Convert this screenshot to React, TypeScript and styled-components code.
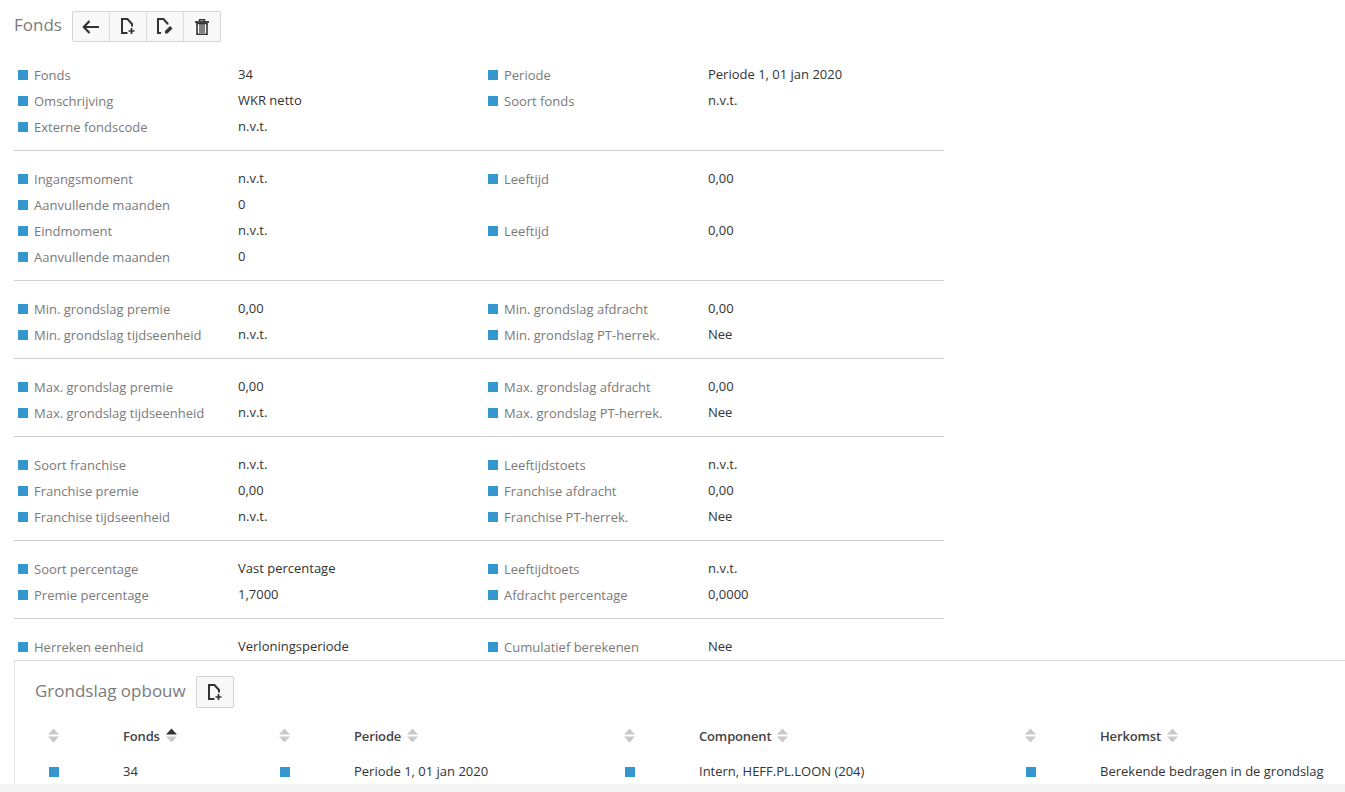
import { Fragment } from 'react';
import styled, { createGlobalStyle } from 'styled-components';

const GlobalStyle = createGlobalStyle`
	html, body {
		margin: 0;
		padding: 0;
		background: #fff;
		font-family: "Open Sans", "Liberation Sans", sans-serif;
	}
`;

const Page = styled.div`
	width: 1345px;
	height: 792px;
	display: flex;
	flex-direction: column;
	overflow: hidden;
	background: #fff;
`;

const Details = styled.div`
	height: 660px;
	flex: none;
	overflow: hidden;
	padding: 11px 0 0 14px;
	box-sizing: border-box;
`;

const Header = styled.div`
	display: flex;
	align-items: center;
	gap: 10px;
	height: 31px;
	margin-bottom: 20px;
`;

const Title = styled.h1`
	margin: 0 0 4px;
	font-size: 17px;
	font-weight: 400;
	color: #7b7b7b;
	line-height: 28px;
`;

const Toolbar = styled.div`
	display: flex;
	height: 31px;
	box-sizing: border-box;
	border: 1px solid #d5d5d5;
	border-radius: 2px;
	background: #f8f8f8;
`;

const ToolButton = styled.div`
	width: 37px;
	box-sizing: border-box;
	display: flex;
	align-items: center;
	justify-content: center;
	border-right: 1px solid #dcdcdc;

	&:last-child {
		width: 36px;
		border-right: none;
	}
`;

const Section = styled.div<{ $first?: boolean }>`
	width: 930px;
	padding: ${(p) => (p.$first ? '0' : '15px')} 0 10px;
	border-bottom: 1px solid #d0d0d0;

	&:last-child {
		border-bottom: none;
	}
`;

const Row = styled.div`
	display: grid;
	grid-template-columns: 470px 1fr;
	height: 26px;
`;

const Field = styled.div`
	display: grid;
	grid-template-columns: 220px 1fr;
	align-items: center;
	padding-left: 4px;
`;

const Label = styled.span`
	display: flex;
	align-items: center;
	gap: 6px;
	font-size: 13px;
	color: #7a7a7a;
	white-space: nowrap;
`;

const Bullet = styled.i`
	display: block;
	flex: none;
	width: 10px;
	height: 10px;
	background: #3498cf;
`;

const Value = styled.span`
	font-size: 13px;
	color: #333;
	white-space: nowrap;
	position: relative;
	top: -1px;
`;

const Panel = styled.div`
	flex: none;
	height: 124px;
	margin-left: 14px;
	box-sizing: border-box;
	border-top: 1px solid #d8d8d8;
	border-left: 1px solid #e2e2e2;
	overflow: hidden;
`;

const PanelHeader = styled.div`
	display: flex;
	align-items: center;
	gap: 10px;
	height: 32px;
	margin: 15px 0 0 20px;
`;

const PanelTitle = styled.h2`
	margin: 0 0 4px;
	font-size: 17px;
	font-weight: 400;
	color: #7b7b7b;
`;

const AddButton = styled.div`
	width: 38px;
	height: 32px;
	box-sizing: border-box;
	display: flex;
	align-items: center;
	justify-content: center;
	border: 1px solid #d5d5d5;
	border-radius: 2px;
	background: #f8f8f8;
`;

const Grid = styled.div`
	display: grid;
	grid-template-columns: 75px 156px 75px 270px 75px 326px 75px 1fr;
	padding-left: 33px;
	margin-top: 15px;
`;

const HeadCell = styled.div`
	height: 35px;
	box-sizing: border-box;
	padding-bottom: 10px;
	display: flex;
	align-items: center;
	gap: 6px;
	font-size: 13px;
	font-weight: 600;
	letter-spacing: -0.15px;
	color: #444;
	white-space: nowrap;
`;

const BodyCell = styled.div`
	height: 26px;
	display: flex;
	align-items: center;
	font-size: 13px;
	color: #333;
	white-space: nowrap;
`;

const BulletCell = styled(BodyCell)`
	padding: 2px 0 0 1px;
	box-sizing: border-box;
`;

const Footer = styled.div`
	flex: none;
	height: 8px;
	background: #f4f4f4;
`;

const ArrowIcon = () => (
	<svg width="17" height="14" viewBox="0 0 17 14">
		<path d="M7.5 1 L1.8 7 L7.5 13 M2.5 7 H17" fill="none" stroke="#333" strokeWidth="2.2" />
	</svg>
);

const NewDocIcon = () => (
	<svg width="14" height="17" viewBox="0 0 14 17">
		<path d="M6.5 15 H1 V1 H6.5 L11 6 V8.5" fill="none" stroke="#333" strokeWidth="2" />
		<path d="M10.5 10 V16 M7.5 13 H13.5" fill="none" stroke="#333" strokeWidth="1.7" />
	</svg>
);

const EditDocIcon = () => (
	<svg width="16" height="17" viewBox="0 0 16 17">
		<path d="M4 15 H1 V1 H6.5 L10.5 5.5 V6.5" fill="none" stroke="#333" strokeWidth="2" />
		<path d="M13 8 L15.5 10.5 L10.5 15.5 H8 V13 Z" fill="#333" />
	</svg>
);

const TrashIcon = () => (
	<svg width="14" height="16" viewBox="0 0 14 16">
		<path d="M0 3 H14" stroke="#333" strokeWidth="1.8" />
		<path d="M4.5 2.5 V0.8 H9.5 V2.5" fill="none" stroke="#333" strokeWidth="1.4" />
		<path d="M2 4.5 H12 V15.2 H2 Z" fill="none" stroke="#333" strokeWidth="1.6" />
		<path d="M5 5 V14 M7 5 V14 M9 5 V14" stroke="#333" strokeWidth="1.2" />
	</svg>
);

const SortIcon = ({ active }: { active?: boolean }) => (
	<svg width="11" height="15" viewBox="0 0 11 15">
		<path d="M5.5 0.5 L11 6.5 H0 Z" fill={active ? '#333' : '#c9c9c9'} />
		<path d="M0 8.5 H11 L5.5 14.5 Z" fill="#c9c9c9" />
	</svg>
);

type FieldData = [string, string];
type RowData = [FieldData, FieldData?];

const sections: RowData[][] = [
	[
		[['Fonds', '34'], ['Periode', 'Periode 1, 01 jan 2020']],
		[['Omschrijving', 'WKR netto'], ['Soort fonds', 'n.v.t.']],
		[['Externe fondscode', 'n.v.t.']],
	],
	[
		[['Ingangsmoment', 'n.v.t.'], ['Leeftijd', '0,00']],
		[['Aanvullende maanden', '0']],
		[['Eindmoment', 'n.v.t.'], ['Leeftijd', '0,00']],
		[['Aanvullende maanden', '0']],
	],
	[
		[['Min. grondslag premie', '0,00'], ['Min. grondslag afdracht', '0,00']],
		[['Min. grondslag tijdseenheid', 'n.v.t.'], ['Min. grondslag PT-herrek.', 'Nee']],
	],
	[
		[['Max. grondslag premie', '0,00'], ['Max. grondslag afdracht', '0,00']],
		[['Max. grondslag tijdseenheid', 'n.v.t.'], ['Max. grondslag PT-herrek.', 'Nee']],
	],
	[
		[['Soort franchise', 'n.v.t.'], ['Leeftijdstoets', 'n.v.t.']],
		[['Franchise premie', '0,00'], ['Franchise afdracht', '0,00']],
		[['Franchise tijdseenheid', 'n.v.t.'], ['Franchise PT-herrek.', 'Nee']],
	],
	[
		[['Soort percentage', 'Vast percentage'], ['Leeftijdtoets', 'n.v.t.']],
		[['Premie percentage', '1,7000'], ['Afdracht percentage', '0,0000']],
	],
	[[['Herreken eenheid', 'Verloningsperiode'], ['Cumulatief berekenen', 'Nee']]],
];

const columns = [
	{ title: 'Fonds', value: '34', active: true },
	{ title: 'Periode', value: 'Periode 1, 01 jan 2020' },
	{ title: 'Component', value: 'Intern, HEFF.PL.LOON (204)' },
	{ title: 'Herkomst', value: 'Berekende bedragen in de grondslag' },
];

const renderField = (field?: FieldData) =>
	field ? (
		<Field>
			<Label>
				<Bullet />
				{field[0]}
			</Label>
			<Value>{field[1]}</Value>
		</Field>
	) : (
		<div />
	);

function App() {
	return (
		<>
			<GlobalStyle />
			<Page>
				<Details>
					<Header>
						<Title>Fonds</Title>
						<Toolbar>
							<ToolButton>
								<ArrowIcon />
							</ToolButton>
							<ToolButton>
								<NewDocIcon />
							</ToolButton>
							<ToolButton>
								<EditDocIcon />
							</ToolButton>
							<ToolButton>
								<TrashIcon />
							</ToolButton>
						</Toolbar>
					</Header>
					{sections.map((rows, i) => (
						<Section key={i} $first={i === 0}>
							{rows.map((row, j) => (
								<Row key={j}>
									{renderField(row[0])}
									{renderField(row[1])}
								</Row>
							))}
						</Section>
					))}
				</Details>
				<Panel>
					<PanelHeader>
						<PanelTitle>Grondslag opbouw</PanelTitle>
						<AddButton>
							<NewDocIcon />
						</AddButton>
					</PanelHeader>
					<Grid>
						{columns.map((c) => (
							<Fragment key={c.title}>
								<HeadCell>
									<SortIcon />
								</HeadCell>
								<HeadCell>
									{c.title}
									<SortIcon active={c.active} />
								</HeadCell>
							</Fragment>
						))}
						{columns.map((c) => (
							<Fragment key={c.title}>
								<BulletCell>
									<Bullet />
								</BulletCell>
								<BodyCell>{c.value}</BodyCell>
							</Fragment>
						))}
					</Grid>
				</Panel>
				<Footer />
			</Page>
		</>
	);
}

export default App;
